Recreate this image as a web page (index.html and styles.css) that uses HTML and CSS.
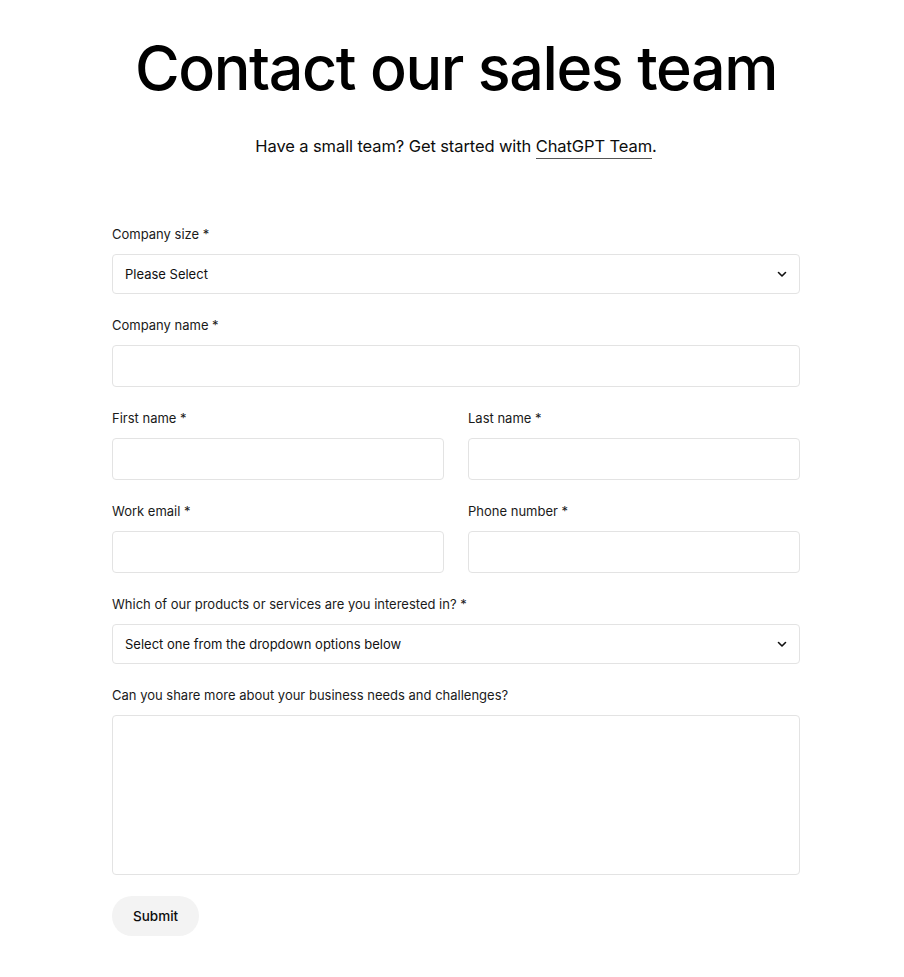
FILE: index.html
```html
<!DOCTYPE html>
<html lang="en">
<head>
<meta charset="utf-8">
<title>Contact our sales team</title>
<link rel="stylesheet" href="styles.css">
</head>
<body>
<main class="page">
  <h1 class="title">Contact our sales team</h1>
  <p class="subtitle">Have a small team? Get started with <a href="#" class="link">ChatGPT Team</a>.</p>
  <form class="form">
    <div class="field">
      <label class="label">Company size *</label>
      <div class="select">
        <span>Please Select</span>
        <svg class="chev" width="12" height="12" viewBox="0 0 12 12"><path d="M2.5 4.5 6 8l3.5-3.5" fill="none" stroke="#111" stroke-width="1.6" stroke-linecap="round" stroke-linejoin="round"/></svg>
      </div>
    </div>
    <div class="field">
      <label class="label">Company name *</label>
      <input class="input" type="text">
    </div>
    <div class="row">
      <div class="field">
        <label class="label">First name *</label>
        <input class="input" type="text">
      </div>
      <div class="field">
        <label class="label">Last name *</label>
        <input class="input" type="text">
      </div>
    </div>
    <div class="row">
      <div class="field">
        <label class="label">Work email *</label>
        <input class="input" type="text">
      </div>
      <div class="field">
        <label class="label">Phone number *</label>
        <input class="input" type="text">
      </div>
    </div>
    <div class="field">
      <label class="label">Which of our products or services are you interested in? *</label>
      <div class="select">
        <span>Select one from the dropdown options below</span>
        <svg class="chev" width="12" height="12" viewBox="0 0 12 12"><path d="M2.5 4.5 6 8l3.5-3.5" fill="none" stroke="#111" stroke-width="1.6" stroke-linecap="round" stroke-linejoin="round"/></svg>
      </div>
    </div>
    <div class="field">
      <label class="label">Can you share more about your business needs and challenges?</label>
      <textarea class="textarea"></textarea>
    </div>
    <div class="actions">
      <button type="button" class="submit">Submit</button>
    </div>
  </form>
</main>
</body>
</html>
```
FILE: styles.css
```css
* { box-sizing: border-box; }
html, body { margin: 0; padding: 0; background: #fff; }
body {
  font-family: Inter, "Noto Sans", "Liberation Sans", sans-serif;
  color: #0d0d0d;
}
.page {
  width: 688px;
  margin-left: 112px;
  padding-top: 30px;
}
.title {
  margin: 0;
  text-align: center;
  font-size: 61px;
  font-weight: 500;
  letter-spacing: -1.4px;
  line-height: 76px;
  color: #000;
}
.subtitle {
  margin: 28px 0 0;
  text-align: center;
  font-size: 16.5px;
  line-height: 24px;
  letter-spacing: -0.1px;
}
.link {
  color: inherit;
  text-decoration: none;
  border-bottom: 1px solid #555;
  padding-bottom: 2px;
}
.form {
  margin-top: 66px;
  display: flex;
  flex-direction: column;
  gap: 21px;
}
.field {
  display: flex;
  flex-direction: column;
  gap: 10px;
  flex: 1;
  min-width: 0;
}
.row {
  display: flex;
  gap: 24px;
}
.label {
  font-size: 13px;
  line-height: 20px;
  color: #1a1a1a;
}
.select {
  height: 40px;
  border: 1px solid #e3e3e3;
  border-radius: 4px;
  display: flex;
  align-items: center;
  justify-content: space-between;
  padding: 0 11px 0 12px;
  font-size: 13px;
  color: #111;
}
.chev { display: block; }
.input {
  height: 42px;
  border: 1px solid #e3e3e3;
  border-radius: 4px;
  width: 100%;
  font: inherit;
}
.textarea {
  height: 160px;
  border: 1px solid #e3e3e3;
  border-radius: 4px;
  width: 100%;
  resize: none;
  font: inherit;
}
.actions { display: flex; }
.submit {
  height: 40px;
  padding: 0 21px;
  border: none;
  border-radius: 20px;
  background: #f3f3f3;
  font-family: inherit;
  font-size: 13.5px;
  font-weight: 500;
  color: #0d0d0d;
}
```
